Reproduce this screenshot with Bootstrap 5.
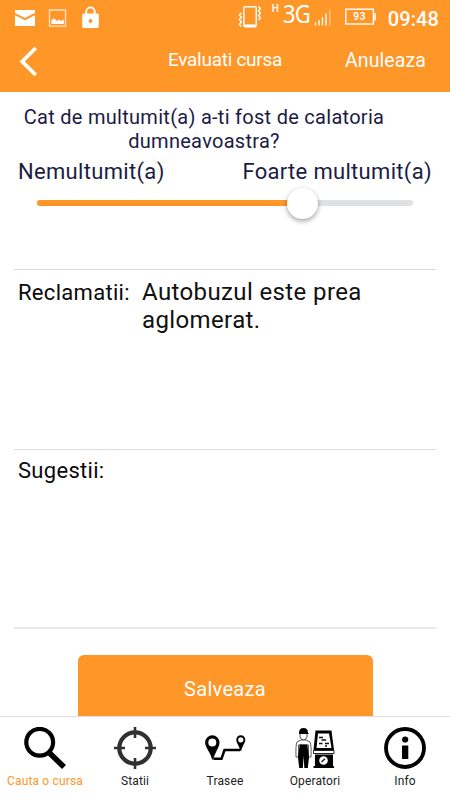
<!DOCTYPE html>
<html lang="ro">
<head>
<meta charset="utf-8">
<meta name="viewport" content="width=device-width, initial-scale=1">
<title>Evaluati cursa</title>
<link href="https://cdn.jsdelivr.net/npm/bootstrap@5.3.0/dist/css/bootstrap.min.css" rel="stylesheet">
<style>
body{font-family:Roboto,sans-serif;height:800px;background:#fff;color:#111}
svg{display:block;flex:none}
.app-head{background:#ff9628;height:92px}
.status-bar{height:36px;padding:0 11px 0 15px}
.net-h{font:500 10px/12px Roboto,sans-serif;margin:3px 4px 0 11px}
.net-g{font:400 25px/34px "Noto Sans",sans-serif;letter-spacing:-.9px;width:30px;margin-top:-4px;transform:scaleX(.88);transform-origin:left}
.batt{margin-left:14px}
.clock{font-size:20px;line-height:36px;font-weight:500;letter-spacing:.1px;margin-left:12px;padding-top:1px}
.title-bar{height:56px;padding:0 24px 6px 19px;font-size:19.5px}
.title-bar .title{left:168px;top:12px;line-height:24px;font-size:19px;letter-spacing:-.28px}
.title-bar .cancel{letter-spacing:.1px}
.navy{color:#1c1b45}
.rating{height:177px;padding:14px 18px 0}
.question{font-size:20px;line-height:23.5px;letter-spacing:.28px;padding-right:47px;margin-left:5px}
.ends{font-size:22px;line-height:28px;letter-spacing:.32px;margin-top:5px}
.slider-track{height:6px;border-radius:3px;background:#e0e1e3;margin:14px 19px 0}
.slider-fill{height:6px;border-radius:3px;background:#ff9628}
.knob{width:31px;height:31px;border-radius:50%;background:#fff;right:-16px;top:-12px;box-shadow:0 2px 5px rgba(0,0,0,.38)}
.field{margin:0 14px;border-top:1px solid #dcdcdc;padding:8px 4px 0}
.field-last{border-top:2px solid #e9e9e9}
.field .lbl{font-size:22px;line-height:28px;letter-spacing:.3px;width:124px;flex:none;color:#0a0a0a}
.field .val{font-size:24px;line-height:28px;letter-spacing:.38px;color:#111}
.save{width:295px;height:61px;border-radius:6px 6px 0 0;background:#ff9628;font-size:20px;letter-spacing:.3px;padding-top:7px;margin-top:26px}
.tabs{border-top:1px solid #dedfe1;height:84px;padding-top:10px}
.tab-item{width:90px;font-size:12px;line-height:16px;letter-spacing:.15px;color:#222}
.tab-item svg{margin-bottom:4px}
.tab-item.on{color:#ff9628}
</style>
<script src="https://cdn.jsdelivr.net/npm/bootstrap@5.3.0/dist/js/bootstrap.bundle.min.js"></script>
</head>
<body class="d-flex flex-column overflow-hidden">
<header class="app-head text-white flex-shrink-0">
  <div class="status-bar d-flex align-items-center">
    <svg width="85" height="36" viewBox="15 0 85 36" fill="#fff"><path d="M15 10H35V12.7L25 18L15 13Z"/><path d="M15 15.3L25 20.3L35 15.3V26H15Z"/><path d="M49.5 10H65.5V26.2H49.5Z" fill="none" stroke="#fff" stroke-opacity=".75" stroke-width="1.3"/><path d="M51.5 24V20L54 18.3L57 21L59 19.8L61 21L63.8 19.5V24Z"/><path fill-rule="evenodd" d="M83.8 13.5H97.2Q98.8 13.5 98.8 15V26.5Q98.8 28 97.2 28H83.8Q82.2 28 82.2 26.5V15Q82.2 13.5 83.8 13.5ZM90.5 19A2 2 0 1 0 90.5 23A2 2 0 1 0 90.5 19Z"/><path d="M86.3 14V11.5A4.1 4.1 0 0 1 94.7 11.5V14" fill="none" stroke="#fff" stroke-width="1.8"/></svg>
    <svg class="ms-auto" width="24" height="36" viewBox="237 0 24 36" fill="none" stroke="#fff"><rect x="243.9" y="6.7" width="12.3" height="20" rx="1.2" stroke-width="1.4"/><path d="M244 25.7H256" stroke-width="2.6"/><path d="M241.5 13L239.4 15L241.5 17.2L239.4 19.5L241.5 22L239.4 24.2L241.3 26.5M258.5 6.5L260.5 8.8L258.5 11L260.5 13.2L258.5 15.5L260.5 17.8L258.5 20" stroke-width="1.4"/></svg>
    <span class="net-h align-self-start">H</span><span class="net-g align-self-start">3G</span>
    <svg width="18" height="36" viewBox="313 0 18 36" stroke="#fff" stroke-width="1.3"><path d="M315.500 22V25.500M319 20V25.500M322.500 17V25.500M326 13.500V25.500"/><path d="M329.800 9.500V25.500" opacity=".5"/></svg>
    <svg class="batt" width="31" height="36" viewBox="345 0 31 36"><rect x="345.8" y="9.2" width="27.6" height="14.8" fill="none" stroke="#fff" stroke-width="1.4"/><path d="M375 13V20.5" stroke="#fff" stroke-width="1.6"/><text x="359.6" y="20.4" text-anchor="middle" font-family="Roboto,sans-serif" font-weight="600" font-size="10.5" letter-spacing=".5" fill="#fff">93</text></svg>
    <span class="clock">09:48</span>
  </div>
  <div class="title-bar position-relative d-flex align-items-center justify-content-between">
    <svg width="19" height="31" viewBox="0 0 19 31"><path d="M16.8 2L3.2 15.5L16.8 29" fill="none" stroke="#fff" stroke-width="3.8"/></svg>
    <span class="title position-absolute">Evaluati cursa</span>
    <span class="cancel">Anuleaza</span>
  </div>
</header>
<section class="rating navy flex-shrink-0">
  <div class="question text-center">Cat de multumit(a) a-ti fost de calatoria dumneavoastra?</div>
  <div class="ends d-flex justify-content-between"><span>Nemultumit(a)</span><span>Foarte multumit(a)</span></div>
  <div class="slider-track"><div class="slider-fill position-relative" style="width:70.5%"><div class="knob position-absolute"></div></div></div>
</section>
<section class="field d-flex flex-shrink-0" style="height:180px"><div class="lbl pt-0" style="margin-top:1px">Reclamatii:</div><div class="val">Autobuzul este prea<br>aglomerat.</div></section>
<section class="field flex-shrink-0" style="height:178px"><div class="lbl" style="margin-top:-1px">Sugestii:</div></section>
<section class="field field-last d-flex justify-content-center p-0 flex-shrink-0" style="height:89px"><div class="save text-white d-flex align-items-center justify-content-center">Salveaza</div></section>
<nav class="tabs d-flex bg-white flex-shrink-0">
  <div class="tab-item on d-flex flex-column align-items-center"><svg width="42" height="42" viewBox="0 0 42 42" fill="none" stroke="#000"><circle cx="15.7" cy="15.3" r="13.4" stroke-width="4.2"/><path d="M25.5 26L40 40" stroke-width="5.6"/></svg>Cauta o cursa</div>
  <div class="tab-item d-flex flex-column align-items-center"><svg width="42" height="42" viewBox="0 0 42 42" fill="none" stroke="#303032"><circle cx="21" cy="21" r="15.7" stroke-width="4.2"/><path d="M21 0V11M21 31V42M0 21H11M31 21H42" stroke-width="2.6"/></svg>Statii</div>
  <div class="tab-item d-flex flex-column align-items-center"><svg width="42" height="42" viewBox="0 0 42 42"><path fill-rule="evenodd" d="M8.3 8.3A7.2 7.2 0 0 1 15.5 15.5C15.5 20.5 11 25 9.2 32.5H8C7 26 1.1 20.5 1.1 15.5A7.2 7.2 0 0 1 8.3 8.3ZM8.3 11.4A4 4 0 1 0 8.3 19.4A4 4 0 1 0 8.3 11.4Z"/><path d="M9.5 31.8H17.5L20.500 23H36" fill="none" stroke="#000" stroke-width="2.500"/><path fill-rule="evenodd" d="M36.8 8.3A4.5 4.5 0 0 1 41.3 12.8C41.3 16 38 19.5 37.2 24H36.4C35.5 19.5 32.3 16 32.3 12.8A4.5 4.5 0 0 1 36.8 8.3ZM36.8 10.2A2.6 2.6 0 1 0 36.8 15.4A2.6 2.6 0 1 0 36.8 10.2Z"/></svg>Trasee</div>
  <div class="tab-item d-flex flex-column align-items-center"><svg width="42" height="42" viewBox="294 727 42 42"><path d="M299 733Q299 728 303.500 728Q308 728 308 733L309 734H299Z"/><path d="M300 734V737Q301 740 303.500 740Q306 740 307 737V734" fill="#fff" stroke="#222" stroke-width=".8"/><path d="M301 740L297 742Q295.500 745 296 757H298.500V745H308.500V757H311Q311.500 745 310 742L306 740Z" fill="#fff" stroke="#333" stroke-width=".8"/><path d="M299.500 744.500H307.500V746L309 757.500L307.800 768H304.300L303.700 756L302.800 768H299.200L298 757.500L299.500 746Z"/><path d="M315.500 730.500H331.500L334 750H313.500Z"/><path d="M318 733.500H329L331.500 748H316.500Z" fill="#fff"/><path d="M319 737.500H323M321.500 740H326M319 743.500H322.500M325 743.500H329M325 746H327" stroke="#111" stroke-width="1.4"/><path d="M313.500 750.500H334V753.500H313.500Z" fill="#fff" stroke="#222" stroke-width="1"/><path d="M315 754.500H333V766H334V768H313.500V766H315Z"/><circle cx="323.500" cy="760.500" r="4.300" fill="#fff"/><path d="M321.500 762L325 758.800" stroke="#222" stroke-width="1.500"/></svg>Operatori</div>
  <div class="tab-item d-flex flex-column align-items-center"><svg width="42" height="42" viewBox="0 0 42 42"><circle cx="21" cy="21" r="19" fill="none" stroke="#000" stroke-width="3.8"/><circle cx="21.200" cy="12.500" r="3.100"/><path d="M18 18.500H24.300V32H18Z"/></svg>Info</div>
</nav>
</body>
</html>
